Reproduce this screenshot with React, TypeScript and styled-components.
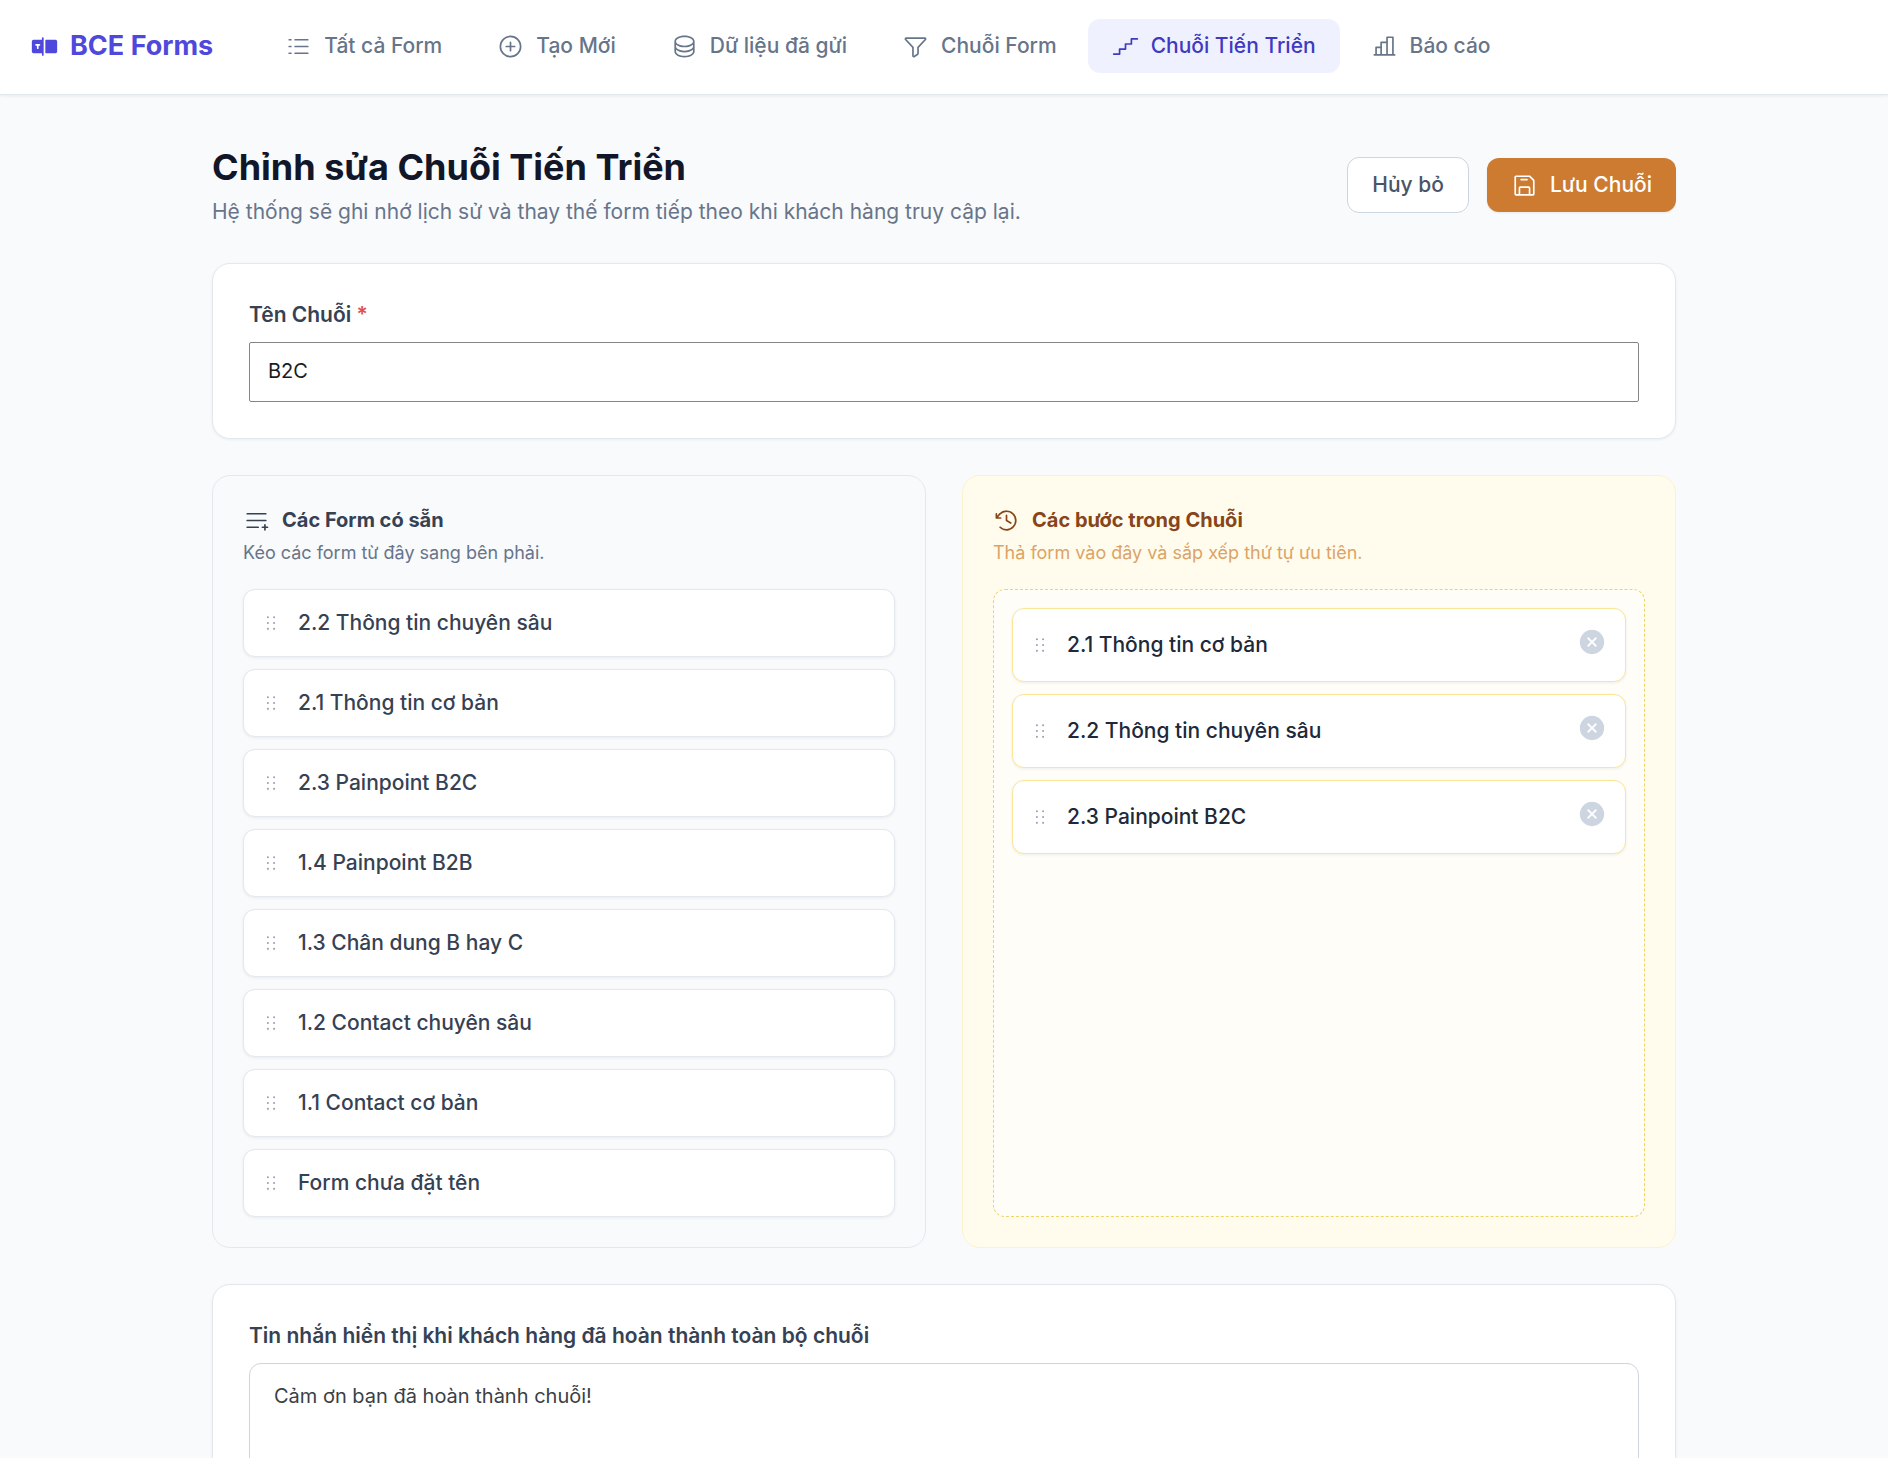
import React, { useState } from "react";
import styled, { createGlobalStyle } from "styled-components";
import {
  PiChartBar,
  PiClockCounterClockwise,
  PiDatabase,
  PiDotsSixVertical,
  PiFloppyDisk,
  PiFunnel,
  PiListDashes,
  PiListPlus,
  PiPlusCircle,
  PiSteps,
  PiTextboxFill,
  PiXCircleFill,
} from "react-icons/pi";

const GlobalStyle = createGlobalStyle`
  *, *::before, *::after { box-sizing: border-box; }
  body {
    margin: 0;
    background: #f9fafc;
    color: #202939;
    font-family: Inter, "Liberation Sans", sans-serif;
    font-size: 21px;
    line-height: 30px;
    -webkit-font-smoothing: antialiased;
  }
  h1, h2, p, ul { margin: 0; padding: 0; }
  button, input, textarea { font-family: inherit; }
`;

const Header = styled.header`
  display: flex;
  align-items: center;
  gap: 48px;
  padding: 19px 31px 21px;
  background: #ffffff;
  border-bottom: 1px solid #e3e8ef;
  box-shadow: 0 1px 3px rgba(15, 23, 42, 0.08);
`;

const Brand = styled.a`
  display: flex;
  align-items: center;
  gap: 12px;
  color: #4f48dc;
  font-size: 27px;
  font-weight: 700;
  line-height: 36px;
  text-decoration: none;
  white-space: nowrap;
`;

const Nav = styled.nav`
  display: flex;
  gap: 7px;
`;

const NavLink = styled.a<{ $active?: boolean }>`
  display: flex;
  align-items: center;
  gap: 12px;
  padding: 12px 24px;
  border-radius: 12px;
  background: ${(p) => (p.$active ? "#eff1fe" : "transparent")};
  color: ${(p) => (p.$active ? "#4039c3" : "#67758a")};
  font-weight: 500;
  text-decoration: none;
  white-space: nowrap;
`;

const Main = styled.main`
  display: flex;
  flex-direction: column;
  gap: 36px;
  max-width: 1464px;
  margin: 0 auto;
  padding: 48px 0;
`;

const PageHead = styled.div`
  display: flex;
  align-items: center;
  justify-content: space-between;
`;

const Title = styled.h1`
  color: #111729;
  font-size: 36px;
  font-weight: 700;
  line-height: 48px;
`;

const Subtitle = styled.p`
  margin-top: 6px;
  color: #67758a;
`;

const Actions = styled.div`
  display: flex;
  align-items: center;
  gap: 18px;
`;

const Button = styled.button<{ $primary?: boolean }>`
  display: flex;
  align-items: center;
  gap: 12px;
  padding: 12px 24px;
  border: ${(p) => (p.$primary ? "0" : "1px solid #cdd5e0")};
  border-radius: 12px;
  background: ${(p) => (p.$primary ? "#cc7b30" : "#ffffff")};
  box-shadow: ${(p) => (p.$primary ? "0 1px 2px rgba(15, 23, 42, 0.08)" : "none")};
  color: ${(p) => (p.$primary ? "#ffffff" : "#495567")};
  font-size: 21px;
  font-weight: 500;
  line-height: 30px;
  cursor: pointer;
`;

const Card = styled.section`
  padding: 36px;
  border: 1px solid #e3e8ef;
  border-radius: 18px;
  background: #ffffff;
  box-shadow: 0 1px 3px rgba(15, 23, 42, 0.06);
`;

const Label = styled.label`
  display: block;
  margin-bottom: 12px;
  color: #364153;
  font-weight: 600;
`;

const Required = styled.span`
  color: #de524c;
`;

const TextInput = styled.input`
  display: block;
  width: 100%;
  padding: 14px 18px 16px;
  border: 1px solid #858585;
  border-radius: 2px;
  background: #ffffff;
  color: #1c1c1c;
  font-size: 20px;
  line-height: 28px;
`;

const TextArea = styled.textarea`
  display: block;
  width: 100%;
  padding: 18px 24px;
  border: 1px solid #cdd5e0;
  border-radius: 12px;
  background: #ffffff;
  color: #3b3f46;
  font-size: 20px;
  line-height: 28px;
  resize: vertical;
`;

const Columns = styled.div`
  display: grid;
  grid-template-columns: 1fr 1fr;
  gap: 36px;
`;

const Panel = styled.section<{ $warm?: boolean }>`
  display: flex;
  flex-direction: column;
  padding: 30px;
  border: 1px solid ${(p) => (p.$warm ? "#fcf3cb" : "#e3e8ef")};
  border-radius: 18px;
  background: ${(p) => (p.$warm ? "#fffced" : "#f9fafc")};
`;

const PanelTitle = styled.h2<{ $warm?: boolean }>`
  display: flex;
  align-items: center;
  gap: 12px;
  color: ${(p) => (p.$warm ? "#884519" : "#364153")};
  font-size: 20px;
  font-weight: 700;
  line-height: 28px;
`;

const PanelHint = styled.p<{ $warm?: boolean }>`
  margin: 6px 0 24px;
  color: ${(p) => (p.$warm ? "#dca368" : "#67758a")};
  font-size: 18px;
  line-height: 25px;
`;

const List = styled.ul`
  display: flex;
  flex-direction: column;
  gap: 12px;
  list-style: none;
`;

const DropZone = styled(List)`
  && {
    flex: 1;
    padding: 18px;
  }
  border: 1px dashed #efd365;
  border-radius: 12px;
  background: #fffdf8;
`;

const Item = styled.li<{ $warm?: boolean }>`
  display: flex;
  align-items: center;
  gap: 16px;
  padding: 18px 18px 18px 16px;
  border: 1px solid ${(p) => (p.$warm ? "#f9e697" : "#e3e8ef")};
  border-radius: 12px;
  background: #ffffff;
  box-shadow: 0 1px 3px rgba(15, 23, 42, 0.07);
  color: ${(p) => (p.$warm ? "#202939" : "#364153")};
  font-weight: 500;
  cursor: grab;

  & > svg {
    color: #97a3b6;
  }
`;

const ItemName = styled.span`
  flex: 1;
`;

const RemoveButton = styled.button`
  display: flex;
  align-items: flex-start;
  height: 36px;
  padding: 0;
  border: 0;
  background: none;
  color: #cdd5e0;
  cursor: pointer;
`;

const navItems = [
  { label: "Tất cả Form", Icon: PiListDashes },
  { label: "Tạo Mới", Icon: PiPlusCircle },
  { label: "Dữ liệu đã gửi", Icon: PiDatabase },
  { label: "Chuỗi Form", Icon: PiFunnel },
  { label: "Chuỗi Tiến Triển", Icon: PiSteps, active: true },
  { label: "Báo cáo", Icon: PiChartBar },
];

const availableForms = [
  "2.2 Thông tin chuyên sâu",
  "2.1 Thông tin cơ bản",
  "2.3 Painpoint B2C",
  "1.4 Painpoint B2B",
  "1.3 Chân dung B hay C",
  "1.2 Contact chuyên sâu",
  "1.1 Contact cơ bản",
  "Form chưa đặt tên",
];

export default function App() {
  const [name, setName] = useState("B2C");
  const [message, setMessage] = useState("Cảm ơn bạn đã hoàn thành chuỗi!");
  const [steps, setSteps] = useState([
    "2.1 Thông tin cơ bản",
    "2.2 Thông tin chuyên sâu",
    "2.3 Painpoint B2C",
  ]);

  return (
    <>
      <GlobalStyle />
      <Header>
        <Brand href="#">
          <PiTextboxFill size={27} />
          BCE Forms
        </Brand>
        <Nav>
          {navItems.map(({ label, Icon, active }) => (
            <NavLink key={label} href="#" $active={active}>
              <Icon size={27} />
              {label}
            </NavLink>
          ))}
        </Nav>
      </Header>

      <Main>
        <PageHead>
          <div>
            <Title>Chỉnh sửa Chuỗi Tiến Triển</Title>
            <Subtitle>
              Hệ thống sẽ ghi nhớ lịch sử và thay thế form tiếp theo khi khách hàng truy cập lại.
            </Subtitle>
          </div>
          <Actions>
            <Button type="button">Hủy bỏ</Button>
            <Button type="button" $primary>
              <PiFloppyDisk size={27} />
              Lưu Chuỗi
            </Button>
          </Actions>
        </PageHead>

        <Card>
          <Label htmlFor="chain-name">
            Tên Chuỗi <Required>*</Required>
          </Label>
          <TextInput
            id="chain-name"
            type="text"
            value={name}
            onChange={(e) => setName(e.target.value)}
          />
        </Card>

        <Columns>
          <Panel>
            <PanelTitle>
              <PiListPlus size={27} />
              Các Form có sẵn
            </PanelTitle>
            <PanelHint>Kéo các form từ đây sang bên phải.</PanelHint>
            <List>
              {availableForms.map((form) => (
                <Item key={form}>
                  <PiDotsSixVertical size={22} />
                  <ItemName>{form}</ItemName>
                </Item>
              ))}
            </List>
          </Panel>

          <Panel $warm>
            <PanelTitle $warm>
              <PiClockCounterClockwise size={27} />
              Các bước trong Chuỗi
            </PanelTitle>
            <PanelHint $warm>Thả form vào đây và sắp xếp thứ tự ưu tiên.</PanelHint>
            <DropZone>
              {steps.map((step) => (
                <Item key={step} $warm>
                  <PiDotsSixVertical size={22} />
                  <ItemName>{step}</ItemName>
                  <RemoveButton
                    type="button"
                    aria-label={`Xóa ${step}`}
                    onClick={() => setSteps(steps.filter((s) => s !== step))}
                  >
                    <PiXCircleFill size={30} />
                  </RemoveButton>
                </Item>
              ))}
            </DropZone>
          </Panel>
        </Columns>

        <Card>
          <Label htmlFor="done-message">
            Tin nhắn hiển thị khi khách hàng đã hoàn thành toàn bộ chuỗi
          </Label>
          <TextArea
            id="done-message"
            rows={4}
            value={message}
            onChange={(e) => setMessage(e.target.value)}
          />
        </Card>
      </Main>
    </>
  );
}
